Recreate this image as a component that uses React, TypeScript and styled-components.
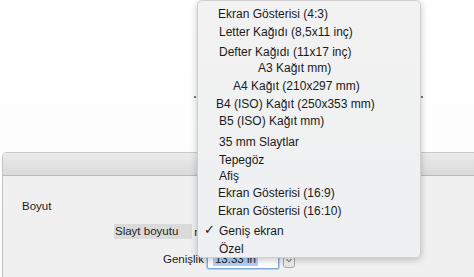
import React from 'react';
import styled, { createGlobalStyle } from 'styled-components';

const GlobalStyle = createGlobalStyle`
  html, body {
    margin: 0;
    padding: 0;
    background: #ffffff;
    font-family: "Liberation Sans", Arial, sans-serif;
    overflow: hidden;
  }
`;

const Page = styled.div`
  position: relative;
  width: 474px;
  height: 277px;
  display: flex;
  flex-direction: column;
  overflow: hidden;
  background: linear-gradient(180deg, #ffffff 0%, #fbfbfb 100%);
`;

const TopArea = styled.div`
  height: 152px;
  flex-shrink: 0;
`;

const Dialog = styled.div`
  flex: 1;
  margin-left: 2px;
  display: flex;
  flex-direction: column;
  border-left: 1px solid #c4c4c4;
  border-top: 1px solid #c9c9c9;
  border-top-left-radius: 5px;
  overflow: hidden;
`;

const TitleBar = styled.div`
  height: 22px;
  background: linear-gradient(180deg, #ebebeb 0%, #dadada 100%);
  border-bottom: 1px solid #b9b9b9;
`;

const Content = styled.div`
  flex: 1;
  background: #f0f0f0;
  padding: 22px 0 0 19px;
  display: flex;
  flex-direction: column;
  font-size: 11.5px;
  color: #1c1c1c;
`;

const SectionLabel = styled.div`
  height: 16px;
  line-height: 16px;
`;

const Row = styled.div<{ $indent: number; $top: number }>`
  display: flex;
  align-items: center;
  margin-left: ${p => p.$indent}px;
  margin-top: ${p => p.$top}px;
`;

const HighlightLabel = styled.div`
  background: #dadada;
  height: 15px;
  line-height: 15px;
  padding: 0 14px 0 1px;
`;

const Clipped = styled.span`
  margin-left: 2px;
`;

const FieldLabel = styled.span`
  margin-right: 3px;
`;

const Input = styled.div`
  width: 72px;
  height: 20px;
  background: #ffffff;
  border: 1px solid #7ea8dc;
  box-shadow: 0 0 0 1px #b7d0f0;
  border-radius: 2px;
  display: flex;
  align-items: center;
  padding-left: 5px;
  box-sizing: border-box;
`;

const Selected = styled.span`
  background: #b4d2f6;
  padding: 0 2px;
  line-height: 14px;
`;

const Stepper = styled.div`
  margin-left: 4px;
  width: 10px;
  height: 12px;
  border: 1px solid #a9a9a9;
  border-radius: 3px;
  background: linear-gradient(180deg, #fdfdfd, #e6e6e6);
  display: flex;
  align-items: center;
  justify-content: center;
  margin-top: 3px;
`;

const Menu = styled.div`
  position: absolute;
  left: 197px;
  top: 0;
  width: 224px;
  height: 258px;
  box-sizing: border-box;
  background: linear-gradient(180deg, #f2f2f2 0%, #eef0f1 100%);
  border: 1px solid #cfcfcf;
  border-radius: 5px;
  box-shadow: 0 2px 7px rgba(0, 0, 0, 0.22);
  padding-top: 5px;
  display: flex;
  flex-direction: column;
  font-size: 12px;
  color: #1a1a1a;
`;

const Item = styled.div<{ $indent: number; $top: number }>`
  position: relative;
  height: 16px;
  line-height: 16px;
  margin-top: ${p => p.$top}px;
  padding-left: ${p => p.$indent}px;
  white-space: nowrap;
`;

const Check = styled.span`
  position: absolute;
  left: 6px;
  top: -1px;
  font-size: 13px;
`;

const Tick = styled.div<{ $left: number }>`
  position: absolute;
  top: 96px;
  left: ${p => p.$left}px;
  width: 2px;
  height: 2px;
  background: #7a7a7a;
`;

const items = [
  { label: 'Ekran Gösterisi (4:3)', indent: 20, top: 0 },
  { label: 'Letter Kağıdı (8,5x11 inç)', indent: 21, top: 2 },
  { label: 'Defter Kağıdı (11x17 inç)', indent: 21, top: 4 },
  { label: 'A3 Kağıt mm)', indent: 60, top: 0 },
  { label: 'A4 Kağıt (210x297 mm)', indent: 35, top: 2 },
  { label: 'B4 (ISO) Kağıt (250x353 mm)', indent: 18, top: 2 },
  { label: 'B5 (ISO) Kağıt mm)', indent: 21, top: 1 },
  { label: '35 mm Slaytlar', indent: 21, top: 5 },
  { label: 'Tepegöz', indent: 21, top: 2 },
  { label: 'Afiş', indent: 21, top: 0 },
  { label: 'Ekran Gösterisi (16:9)', indent: 20, top: 1 },
  { label: 'Ekran Gösterisi (16:10)', indent: 20, top: 2 },
  { label: 'Geniş ekran', indent: 21, top: 4, checked: true },
  { label: 'Özel', indent: 21, top: 2 },
];

export default function App() {
  return (
    <>
      <GlobalStyle />
      <Page>
        <TopArea />
        <Dialog>
          <TitleBar />
          <Content>
            <SectionLabel>Boyut</SectionLabel>
            <Row $indent={92} $top={10}>
              <HighlightLabel>Slayt boyutu</HighlightLabel>
              <Clipped>r</Clipped>
            </Row>
            <Row $indent={141} $top={10}>
              <FieldLabel>Genişlik</FieldLabel>
              <Input>
                <Selected>13.33 in</Selected>
              </Input>
              <Stepper>
                <svg width="6" height="5" viewBox="0 0 6 5">
                  <path d="M0.5 1 L3 3.8 L5.5 1" fill="none" stroke="#555" strokeWidth="1" />
                </svg>
              </Stepper>
            </Row>
          </Content>
        </Dialog>
        <Tick $left={194} />
        <Tick $left={421} />
        <Menu>
          {items.map(it => (
            <Item key={it.label} $indent={it.indent} $top={it.top}>
              {it.checked && <Check>✓</Check>}
              {it.label}
            </Item>
          ))}
        </Menu>
      </Page>
    </>
  );
}
